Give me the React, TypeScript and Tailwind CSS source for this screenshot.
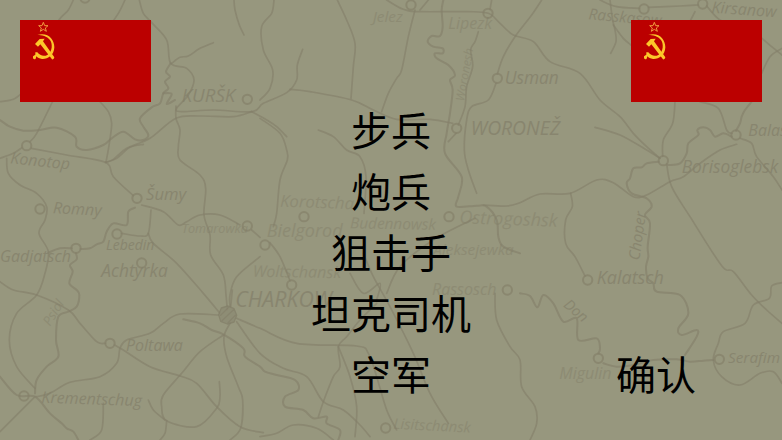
type Point = [number, number];

type Label = {
  text: string;
  x: number;
  y: number;
  size: number;
  rotate?: number;
  bold?: boolean;
  faint?: boolean;
};

const roles = ["步兵", "炮兵", "狙击手", "坦克司机", "空军"];

// each line is a list of "x,y" points, drawn as a smooth curve
const roads = [
  "220,0 205,30 185,50 170,70",
  "70,275 40,298 0,305",
  "375,0 358,35 335,70",
  "418,0 430,40 455,68 500,120 512,190 560,205 582,240 565,285 530,325 545,335 640,330 755,335 790,310 860,278 890,240 892,195 908,148",
  "515,190 540,172 565,168 600,145 640,128",
  "160,300 110,400 90,425",
  "295,300 325,335 335,370 328,430 318,487",
  "755,335 700,350 600,348 528,355 450,415 380,445 340,478 316,487",
  "528,318 528,355 540,390 535,440 540,480 600,525 617,565 612,645 630,705 632,765 670,825 678,885 682,930",
  "702,0 705,30 718,75 732,105",
  "755,335 800,360 830,380 860,410",
  "780,355 840,400 860,450 862,480 840,540 830,640 820,680",
  "822,0 815,40 785,80 790,150 818,210 810,265 780,300",
  "870,268 930,275 1055,300 1120,330 1190,358 1290,358 1358,370",
  "1012,0 1040,60 1065,130 1060,200 1053,295",
  "1245,30 1225,110 1205,210 1190,235 1165,280 1145,335",
  "1160,0 1210,28 1260,35 1400,35 1465,40 1500,70 1540,105 1600,125 1650,185 1740,220 1800,300 1860,350 1900,400 1940,440 1980,475",
  "1285,0 1260,30",
  "1475,0 1470,28",
  "1625,0 1595,45 1545,110 1510,170 1492,222",
  "1488,250 1465,300 1415,320 1400,360 1393,450 1405,510 1430,580",
  "1435,95 1425,125 1412,150 1418,200 1400,260 1395,320 1375,375",
  "1368,400 1345,425",
  "955,390 1000,410 1040,450 1080,470 1098,530 1092,640",
  "1800,0 1850,20 1918,25",
  "1946,22 2040,18 2095,15",
  "2120,18 2160,60 2220,80",
  "2085,35 2072,60",
  "1830,0 1838,60 1845,90 1848,125 1832,160",
  "1840,75 1870,115 1893,135",
  "2280,110 2315,140 2346,165",
  "2346,145 2310,170 2285,220",
  "2025,305 2018,370 1990,420 1988,468",
  "2100,305 2155,325 2180,390 2196,400",
  "2220,415 2255,430 2270,470 2320,530 2346,570",
  "1785,382 1860,405 1940,450 1978,474",
  "2000,492 2015,560 2070,650 2165,797 2200,815 2255,885 2300,930 2346,970",
  "1450,615 1520,618 1560,608 1620,582 1710,580 1790,540 1840,548 1900,590 1940,585 2010,545 2050,530 2100,490 2160,450 2210,433",
  "1712,580 1717,620 1697,660 1697,730 1725,770 1755,828",
  "0,475 40,460 66,443",
  "94,445 200,465 316,487 340,530 400,587",
  "318,487 350,475 390,442 430,433",
  "425,615 490,635 535,675 560,665 600,645 660,645 720,675",
  "755,690 780,712",
  "20,475 25,520 60,555 110,580 140,620 135,660 117,700 145,755 135,820 110,885 50,940 28,1020 50,1100 105,1165",
  "365,700 420,708 445,700 453,630",
  "445,700 460,730 530,790 610,880 660,940",
  "690,920 690,885 710,830 780,770",
  "0,845 40,870 110,885 205,930 240,970 290,1025 316,1030",
  "655,945 540,942 490,970 450,1000 380,1020 360,1045 350,1090 300,1130 210,1147 150,1180 110,1190",
  "344,1035 370,1050 450,1100 540,1128 590,1150 650,1220 720,1280 790,1298",
  "105,1190 0,1295",
  "670,1005 600,1055 545,1120 490,1185 485,1220 500,1262 590,1280 650,1225 660,1190 658,1145",
  "690,970 672,1010 680,1070 715,1160 728,1200 722,1285 690,1320",
  "710,965 780,1060 850,1105 920,1130 970,1205 1030,1230 1080,1275 1110,1310",
  "710,955 780,985 890,1030 1070,1038 1105,1060 1130,1130 1160,1230 1190,1290",
  "697,870 692,920",
  "500,1262 495,1300 480,1320",
  "445,1200 460,1230 495,1260",
  "310,1210 305,1290 270,1320",
  "955,1250 972,1200 1000,1130 1020,1100 1015,1040 1040,1010 1080,960 1130,910",
  "1015,1040 1050,1130 1070,1220 1065,1310",
  "1090,760 1120,830 1170,920 1240,1060 1290,1180 1345,1270",
  "780,1310 830,1300 880,1275 950,1285 1000,1320",
  "1485,880 1490,960 1530,1040 1560,1080 1565,1160 1605,1220 1610,1270 1590,1320",
  "810,728 840,770 870,842",
  "1425,655 1300,720 1200,800 1160,880",
  "1050,820 1090,880 1140,850 1130,900",
  "2346,848 2315,858 2308,895 2260,915 2235,970 2170,995 2155,1030 2140,1080 2165,1130 2220,1155 2280,1120 2320,1115 2346,1150",
];

const rivers = [
  "512,190 498,215 510,230 495,245 505,265 490,280 480,310 455,322 420,355 430,380 445,405 430,420 405,418 370,395 335,415 310,435 260,450 230,440 225,410 170,383 120,390 70,392 30,380 0,360",
  "490,280 515,282 500,312 525,300",
  "1330,0 1325,30 1328,80 1320,108 1295,108 1283,125 1300,140 1328,145 1328,160 1305,160 1310,175 1345,195 1365,225 1350,240 1358,270 1350,340 1340,400 1335,460 1385,530 1375,590 1370,620 1430,617 1460,620 1490,660 1495,710 1510,740 1560,760",
  "2255,305 2235,330 2225,350 2220,370 2208,392",
  "2195,410 2170,400 2145,410 2130,390 2110,382 2092,390 2095,405 2065,430 2060,460 2040,490 2005,495",
  "1975,485 1940,490 1925,502 1900,505 1890,535 1880,550 1895,580 1940,595 1955,620 1935,645 1950,670 1943,740 1945,770 1938,800 1943,835 1960,850 1970,875 2040,885 2065,940 2035,985 2045,1005 2090,990 2090,1010 2055,1065",
  "145,758 180,745 215,745",
  "242,747 270,745 290,733 310,725 320,695 340,670 380,675 385,635 405,623",
  "228,760 230,778 210,795 218,815 208,850 230,870 238,885 230,920 205,935 175,950 168,1020 175,1070 140,1100 110,1140 105,1180",
  "0,1130 50,1185 105,1190 150,1240 185,1270 200,1285 220,1295 235,1320",
  "550,958 600,970 635,990 670,1003 730,1045 735,1070 780,1100 795,1115 830,1125 885,1140 895,1170 855,1190 855,1220 910,1230 940,1255 980,1250 980,1270 1020,1290 1015,1320",
  "1560,880 1590,888 1612,922 1630,885 1660,910 1690,965 1730,955 1735,1020 1790,1015 1800,1045 1795,1060",
  "1810,1090 1850,1100 1900,1095 1960,1080 2030,1078 2070,1085 2110,1082 2140,1080",
];

const towns: Point[] = [
  [80, 437], [742, 298], [1233, 15], [1464, 40], [1492, 235], [1370, 385],
  [1932, 27], [2108, 12], [2208, 405], [1990, 482], [411, 595], [120, 627],
  [228, 745], [351, 702], [425, 789], [742, 678], [912, 650], [795, 735],
  [1347, 650], [875, 855], [1763, 840], [330, 1030], [72, 1188],
  [1795, 1075], [2158, 1078], [1157, 1284], [1522, 870], [255, -6],
];

const labels: Label[] = [
  { text: "KURŠK", x: 545, y: 306, size: 56, bold: true },
  { text: "Jelez", x: 1118, y: 66, size: 46, faint: true },
  { text: "Lipezk", x: 1345, y: 88, size: 48, faint: true },
  { text: "Woronesh", x: 1392, y: 305, size: 36, rotate: -80, faint: true },
  { text: "Usman", x: 1514, y: 252, size: 52 },
  { text: "WORONEŽ", x: 1412, y: 405, size: 58, bold: true },
  { text: "Rasskasow", x: 1765, y: 58, size: 46, rotate: 5 },
  { text: "Kirsanow", x: 2134, y: 38, size: 48, rotate: 4 },
  { text: "Balaschow", x: 2245, y: 408, size: 48 },
  { text: "Borisoglebsk", x: 2045, y: 518, size: 52 },
  { text: "Konotop", x: 30, y: 490, size: 48, rotate: 6 },
  { text: "Romny", x: 158, y: 640, size: 48, rotate: 3 },
  { text: "Šumy", x: 438, y: 600, size: 50 },
  { text: "Tomarowka", x: 545, y: 700, size: 38, faint: true },
  { text: "Lebedin", x: 318, y: 750, size: 42 },
  { text: "Achtyrka", x: 304, y: 832, size: 52 },
  { text: "Gadjatsch", x: 0, y: 786, size: 48 },
  { text: "Korotscha", x: 840, y: 620, size: 50, rotate: 2, faint: true },
  { text: "Bielgorod", x: 800, y: 712, size: 54, faint: true },
  { text: "Budennowsk", x: 1050, y: 685, size: 46, rotate: 1, faint: true },
  { text: "Ostrogoshsk", x: 1378, y: 670, size: 54, rotate: 2, faint: true },
  { text: "Aleksejewka", x: 1300, y: 765, size: 46, faint: true },
  { text: "Woltschansk", x: 758, y: 830, size: 48, rotate: 1, faint: true },
  { text: "Rassosch", x: 1296, y: 885, size: 48, faint: true },
  { text: "CHARKOW", x: 706, y: 922, size: 64, bold: true },
  { text: "Poltawa", x: 378, y: 1052, size: 48 },
  { text: "Krementschug", x: 124, y: 1208, size: 48, rotate: 2 },
  { text: "Kalatsch", x: 1790, y: 852, size: 54 },
  { text: "Choper", x: 1918, y: 782, size: 46, rotate: -82 },
  { text: "Psiol", x: 150, y: 980, size: 40, rotate: -58, faint: true },
  { text: "Don", x: 1688, y: 918, size: 44, rotate: 40 },
  { text: "Migulin", x: 1678, y: 1136, size: 48, faint: true },
  { text: "Serafim", x: 2184, y: 1090, size: 46 },
  { text: "Lisitschansk", x: 1180, y: 1286, size: 44, rotate: 3, faint: true },
];

const smooth = (line: string) => {
  const p = line.split(" ").map((pair) => pair.split(",").map(Number) as Point);
  let d = `M${p[0][0]} ${p[0][1]}`;
  for (let i = 0; i < p.length - 1; i++) {
    const a = p[i - 1] ?? p[i];
    const b = p[i];
    const c = p[i + 1];
    const e = p[i + 2] ?? c;
    d += ` C${b[0] + (c[0] - a[0]) / 6} ${b[1] + (c[1] - a[1]) / 6}`;
    d += ` ${c[0] - (e[0] - b[0]) / 6} ${c[1] - (e[1] - b[1]) / 6}`;
    d += ` ${c[0]} ${c[1]}`;
  }
  return d;
};

const MapBackground = () => {
  return (
    <svg
      className="absolute inset-0 -z-10 h-full w-full"
      viewBox="0 0 2346 1320"
      preserveAspectRatio="xMidYMid slice"
      aria-hidden="true"
    >
      <g fill="none" stroke="#84806a" strokeLinecap="round" strokeLinejoin="round">
        {roads.map((road) => (
          <path d={smooth(road)} strokeWidth="5" opacity="0.65" key={road} />
        ))}
        {rivers.map((river) => (
          <path d={smooth(river)} strokeWidth="6" opacity="0.65" key={river} />
        ))}
        {towns.map(([x, y]) => (
          <circle cx={x} cy={y} r="14" strokeWidth="6" opacity="0.7" key={`${x}-${y}`} />
        ))}
        <path
          d="M664 924 L684 918 L702 926 L710 946 L702 966 L682 972 L662 964 L656 944 Z M662 946 L686 922 M666 962 L702 928 M684 968 L706 946"
          fill="#8d8b74"
          strokeWidth="4"
          opacity="0.8"
        />
      </g>
      <g fill="#84806a" className="font-['Open_Sans',sans-serif] italic">
        {labels.map((label) => (
          <text
            x={label.x}
            y={label.y}
            fontSize={label.size}
            fontWeight={label.bold ? 500 : 400}
            opacity={label.faint ? 0.5 : 0.75}
            transform={`rotate(${label.rotate ?? 0} ${label.x} ${label.y})`}
            key={label.text}
          >
            {label.text}
          </text>
        ))}
      </g>
    </svg>
  );
};

const Flag = () => {
  return (
    <svg className="w-[131px] shrink-0" viewBox="0 0 393 246" role="img" aria-label="苏联">
      <rect width="393" height="246" fill="#bb0000" />
      <path
        d="M70 7 L74 17 L84 17 L76 24 L79 34 L70 28 L61 34 L64 24 L56 17 L66 17 Z"
        fill="none"
        stroke="#f09a3e"
        strokeWidth="3"
      />
      <g fill="#fcc62a">
        <path d="M52 45 C84 36 103 58 103 82 C102 107 83 118 66 117 C58 116 53 113 49 109 L47 116 Q43 120 39 115 L39 109 L46 104 L46 97 L52 97 C60 107 72 111 83 104 C98 94 98 71 90 60 C81 48 66 45 52 45 Z" />
        <path d="M45 72 L59 57 L74 56 L69 64 L103 112 Q102 119 96 118 L61 73 L54 80 Z" />
      </g>
    </svg>
  );
};

const App = () => {
  return (
    <main className="relative isolate grid min-h-screen grid-cols-[1fr_auto_1fr] overflow-hidden bg-[#97977e] p-5 font-['Noto_Sans_CJK_SC',sans-serif] text-[40px] leading-[61px] text-black">
      <MapBackground />
      <div>
        <Flag />
      </div>
      <nav className="flex flex-col items-center justify-end pb-4">
        {roles.map((role) => (
          <button type="button" className="cursor-pointer" key={role}>
            {role}
          </button>
        ))}
      </nav>
      <div className="flex flex-col items-end justify-between pb-4">
        <Flag />
        <button type="button" className="mr-[66px] cursor-pointer">
          确认
        </button>
      </div>
    </main>
  );
};

export default App;
